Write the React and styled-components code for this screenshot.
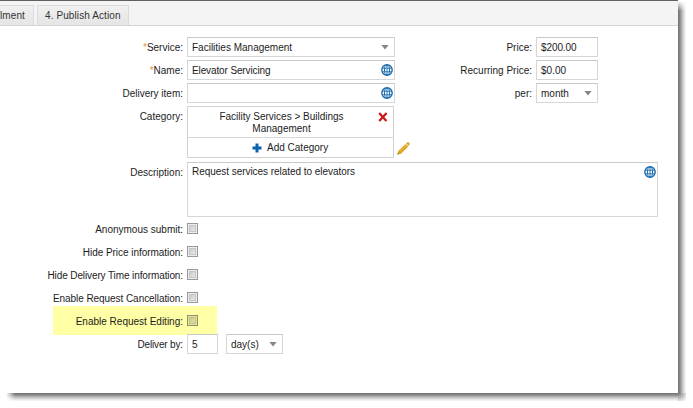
import React from "react";
import styled, { createGlobalStyle } from "styled-components";

const Global = createGlobalStyle`
  * { box-sizing: border-box; }
  body {
    margin: 0;
    background: #fff;
    overflow: hidden;
    color: #1c1c1c;
    font: 10px/12px "Liberation Sans", Arial, sans-serif;
  }
`;

const Stage = styled.div`
  display: grid;
  grid-template-columns: 678px 15px;
  grid-template-rows: 393px 15px;
  width: 693px;
  height: 408px;
`;
const Page = styled.main`
  overflow: hidden;
  background: #fff;
  border-top: 1px solid #625f62;
`;
const RightShadow = styled.div`
  width: 8px;
  height: 393px;
  background: linear-gradient(to right, #707070, #8a8a8a 25%, #b9b9b9 50%, #e2e2e2 78%, #fafafa);
  mask-image: linear-gradient(to bottom, transparent 1px, #000 11px);
`;
const BottomShadow = styled.div`
  height: 8px;
  margin-left: 6px;
  background: linear-gradient(to bottom, #707070, #8a8a8a 25%, #b9b9b9 50%, #e2e2e2 78%, #fafafa);
  mask-image: linear-gradient(to right, transparent, #000 9px);
`;
const CornerShadow = styled.div`
  width: 8px;
  height: 8px;
  background: radial-gradient(circle at 0 0, #747474, #b9b9b9 45%, #e6e6e6 75%, #fff 100%);
`;

const TabBar = styled.nav`
  display: flex;
  align-items: flex-end;
  gap: 3px;
  height: 25px;
  background: #f4f4f4;
  border-bottom: 1px solid #d5d5d5;
`;
const Tab = styled.div`
  width: ${(p) => p.$w}px;
  height: 20px;
  padding: 4px 0 0 ${(p) => p.$pad}px;
  border: 1px solid #dcdcdc;
  border-bottom: 0;
  border-left-width: ${(p) => (p.$cut ? 0 : 1)}px;
  background: linear-gradient(#f0f0f0, #e5e5e5);
  color: #333;
  white-space: nowrap;
  letter-spacing: 0.1px;
`;

const Top = styled.div`
  display: flex;
  margin-top: 11px;
`;
const Column = styled.div`
  display: flex;
  flex-direction: column;
  gap: 3px;
  width: ${(p) => p.$w}px;
`;
const Row = styled.div`
  display: grid;
  grid-template-columns: ${(p) => p.$label || 183}px auto;
  column-gap: 4px;
  justify-content: start;
  align-items: start;
`;
const Label = styled.label`
  padding-top: ${(p) => p.$pt ?? 5}px;
  text-align: right;
  white-space: nowrap;
`;
const Text = styled.span`
  letter-spacing: ${(p) => p.$ls || 0}px;
  white-space: nowrap;
`;
const Star = styled.span`
  color: #e8953a;
`;
const Field = styled.div`
  display: flex;
  justify-content: space-between;
  align-items: center;
  width: ${(p) => p.$w}px;
  height: 20px;
  padding: 1px ${(p) => p.$pr ?? 1}px 0 4px;
  border: 1px solid #d6d6d6;
  border-top-color: #c9c9c9;
  background: #fff;
`;
const Area = styled(Field)`
  align-items: flex-start;
  height: 55px;
  padding-top: 3px;
`;
const CategoryBox = styled.div`
  width: 207px;
  height: 52px;
  border: 1px solid #d2d2d2;
`;
const CategoryItem = styled.div`
  display: grid;
  grid-template-columns: 187px 18px;
  height: 31px;
  padding-top: 4px;
  border-bottom: 1px solid #d8d8d8;
  text-align: center;
`;
const AddCategory = styled.div`
  display: flex;
  align-items: center;
  gap: 5px;
  height: 19px;
  padding-left: 64px;
`;
const CategoryWrap = styled.div`
  display: flex;
  align-items: flex-end;
  gap: 3px;
`;
const DescriptionRow = styled(Row)`
  margin-top: 4px;
`;
const Checks = styled.div`
  margin-top: 1px;
`;
const CheckRow = styled(Row)`
  height: 23px;
`;
const HighlightRow = styled(CheckRow)`
  width: 164px;
  height: 29px;
  margin: -4px 0 0 53px;
  padding-top: 4px;
  background: #ffffa6;
`;
const Checkbox = styled.div`
  width: 11px;
  height: 11px;
  margin-top: 5px;
  border: 1px solid ${(p) => (p.$lit ? "#8f8f68" : "#999")};
  background: ${(p) =>
    p.$lit ? "linear-gradient(135deg, #bcbc80, #efefab)" : "linear-gradient(135deg, #bcbcbc, #f6f6f6)"};
  box-shadow: inset 0 0 0 1px ${(p) => (p.$lit ? "#e4e4a0" : "#ececec")},
    inset 0 0 0 2px ${(p) => (p.$lit ? "#c2c286" : "#c6c6c6")};
`;
const DeliverRow = styled(Row)`
  margin-top: -1px;
`;
const Pair = styled.div`
  display: flex;
  gap: 8px;
`;
const Pencil = styled.svg`
  margin-bottom: 3px;
`;
const GlobeSvg = styled.svg`
  flex: none;
  margin-bottom: 1px;
`;
const CrossSvg = styled.svg`
  margin: 1px 0 0 3px;
`;

const Globe = () => (
  <GlobeSvg width="12" height="12" viewBox="0 0 12 12" fill="none" stroke="#1c6cae">
    <circle cx="6" cy="6" r="5.2" strokeWidth="1.4" />
    <ellipse cx="6" cy="6" rx="2.5" ry="5" />
    <path d="M6 1v10M1 4.2h10M1 7.8h10" strokeWidth=".9" />
  </GlobeSvg>
);
const Arrow = () => (
  <svg width="8" height="5" viewBox="0 0 8 5">
    <path d="M.4 0h7.2L4 4.6z" fill="#858585" />
  </svg>
);
const Cross = () => (
  <CrossSvg width="10" height="10" viewBox="0 0 10 10">
    <path d="M1.2 1 8.4 9M8.6 1 1.2 9" stroke="#cf1515" strokeWidth="2.2" />
  </CrossSvg>
);
const Plus = () => (
  <svg width="10" height="10" viewBox="0 0 10 10">
    <path d="M3.5 .5h3v3h3v3h-3v3h-3v-3h-3v-3h3z" fill="#0c63ad" />
  </svg>
);
const PencilIcon = () => (
  <Pencil width="13" height="13" viewBox="0 0 13 13">
    <path d="M.4 12.6 1.3 9 8.5 1.9l2.8 2.6L4 11.7z" fill="#dda51d" />
    <path d="M9.1 1.4 10.2.4q1.1-.6 1.9.3t.3 1.9l-.9 1.2z" fill="#cf9a2a" />
    <path d="M.4 12.6 1 10.8l1.1 1.2z" fill="#6d541c" />
    <path d="m3 9.5 6.5-6.2" stroke="#efc65a" strokeWidth=".7" />
  </Pencil>
);

const checks = [
  ["Anonymous submit:", 0],
  ["Hide Price information:", -0.04],
  ["Hide Delivery Time information:", -0.11],
  ["Enable Request Cancellation:", -0.06],
];

export default function App() {
  return (
    <Stage>
      <Global />
      <Page>
        <TabBar>
          <Tab $w={34} $pad={0} $cut>lment</Tab>
          <Tab $w={92} $pad={7}>4. Publish Action</Tab>
        </TabBar>
        <Top>
          <Column $w={433}>
            <Row>
              <Label><Text><Star>*</Star>Service:</Text></Label>
              <Field $w={208} $pr={5}><Text>Facilities Management</Text><Arrow /></Field>
            </Row>
            <Row>
              <Label><Text><Star>*</Star>Name:</Text></Label>
              <Field $w={208}><Text $ls={-0.12}>Elevator Servicing</Text><Globe /></Field>
            </Row>
            <Row>
              <Label><Text>Delivery item:</Text></Label>
              <Field $w={208}><span /><Globe /></Field>
            </Row>
            <Row>
              <Label><Text>Category:</Text></Label>
              <CategoryWrap>
                <CategoryBox>
                  <CategoryItem>
                    <Text>Facility Services &gt; Buildings<br />Management</Text>
                    <Cross />
                  </CategoryItem>
                  <AddCategory><Plus /><Text>Add Category</Text></AddCategory>
                </CategoryBox>
                <PencilIcon />
              </CategoryWrap>
            </Row>
          </Column>
          <Column $w={200}>
            <Row $label={99}>
              <Label><Text>Price:</Text></Label>
              <Field $w={62}><Text $ls={-0.1}>$200.00</Text></Field>
            </Row>
            <Row $label={99}>
              <Label><Text>Recurring Price:</Text></Label>
              <Field $w={62}><Text>$0.00</Text></Field>
            </Row>
            <Row $label={99}>
              <Label><Text>per:</Text></Label>
              <Field $w={62} $pr={5}><Text>month</Text><Arrow /></Field>
            </Row>
          </Column>
        </Top>
        <DescriptionRow>
          <Label><Text>Description:</Text></Label>
          <Area $w={471}><Text $ls={-0.04}>Request services related to elevators</Text><Globe /></Area>
        </DescriptionRow>
        <Checks>
          {checks.map(([label, ls]) => (
            <CheckRow key={label}>
              <Label $pt={6}><Text $ls={ls}>{label}</Text></Label>
              <Checkbox />
            </CheckRow>
          ))}
          <HighlightRow $label={130}>
            <Label $pt={6}><Text>Enable Request Editing:</Text></Label>
            <Checkbox $lit />
          </HighlightRow>
          <DeliverRow>
            <Label><Text $ls={-0.15}>Deliver by:</Text></Label>
            <Pair>
              <Field $w={31}><Text>5</Text></Field>
              <Field $w={57} $pr={5}><Text>day(s)</Text><Arrow /></Field>
            </Pair>
          </DeliverRow>
        </Checks>
      </Page>
      <RightShadow />
      <BottomShadow />
      <CornerShadow />
    </Stage>
  );
}
